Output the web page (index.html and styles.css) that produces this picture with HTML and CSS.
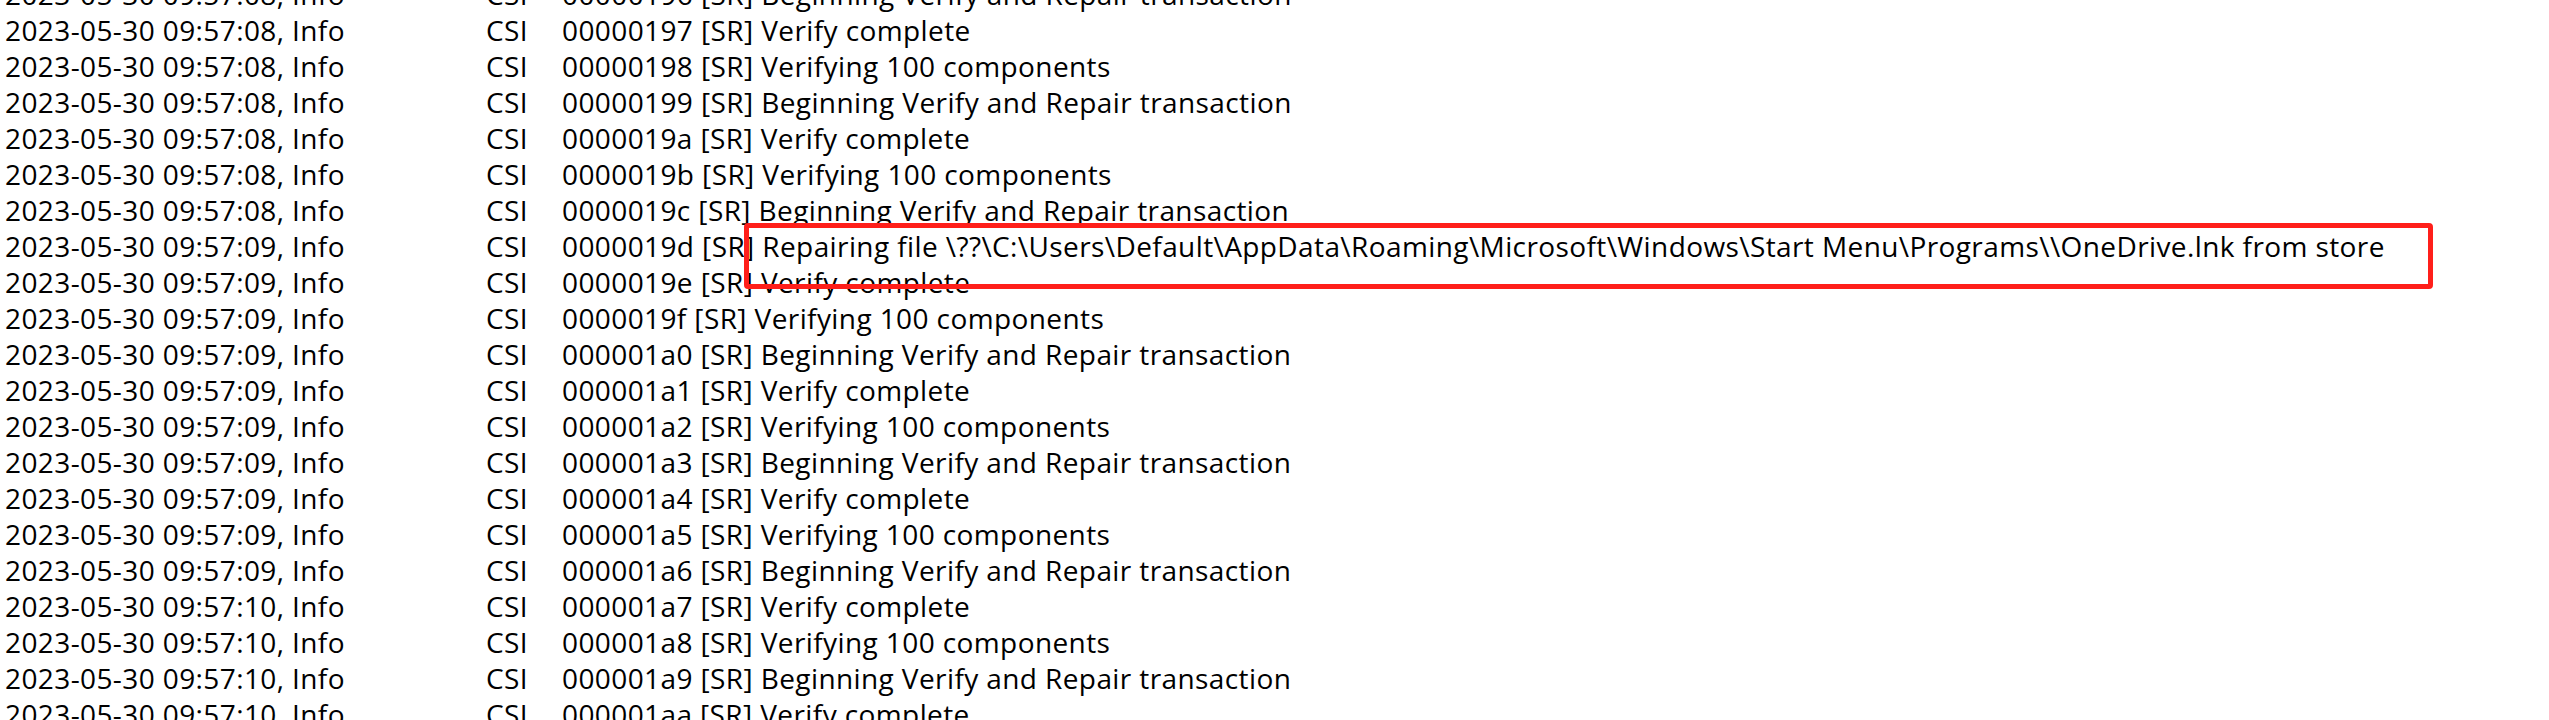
FILE: index.html
```html
<!DOCTYPE html>
<html>
<head>
<meta charset="utf-8">
<link rel="stylesheet" href="styles.css">
</head>
<body>
<div class="log">
  <div class="row"><span class="time">2023-05-30 09:57:08, Info</span><span class="src">CSI</span><span class="msg">00000196 [SR] Beginning Verify and Repair transaction</span></div>
  <div class="row"><span class="time">2023-05-30 09:57:08, Info</span><span class="src">CSI</span><span class="msg">00000197 [SR] Verify complete</span></div>
  <div class="row"><span class="time">2023-05-30 09:57:08, Info</span><span class="src">CSI</span><span class="msg">00000198 [SR] Verifying 100 components</span></div>
  <div class="row"><span class="time">2023-05-30 09:57:08, Info</span><span class="src">CSI</span><span class="msg">00000199 [SR] Beginning Verify and Repair transaction</span></div>
  <div class="row"><span class="time">2023-05-30 09:57:08, Info</span><span class="src">CSI</span><span class="msg">0000019a [SR] Verify complete</span></div>
  <div class="row"><span class="time">2023-05-30 09:57:08, Info</span><span class="src">CSI</span><span class="msg">0000019b [SR] Verifying 100 components</span></div>
  <div class="row"><span class="time">2023-05-30 09:57:08, Info</span><span class="src">CSI</span><span class="msg">0000019c [SR] Beginning Verify and Repair transaction</span></div>
  <div class="row"><span class="time">2023-05-30 09:57:09, Info</span><span class="src">CSI</span><span class="msg">0000019d [SR] Repairing file \??\C:\Users\Default\AppData\Roaming\Microsoft\Windows\Start Menu\Programs\\OneDrive.lnk from store</span></div>
  <div class="row"><span class="time">2023-05-30 09:57:09, Info</span><span class="src">CSI</span><span class="msg">0000019e [SR] Verify complete</span></div>
  <div class="row"><span class="time">2023-05-30 09:57:09, Info</span><span class="src">CSI</span><span class="msg">0000019f [SR] Verifying 100 components</span></div>
  <div class="row"><span class="time">2023-05-30 09:57:09, Info</span><span class="src">CSI</span><span class="msg">000001a0 [SR] Beginning Verify and Repair transaction</span></div>
  <div class="row"><span class="time">2023-05-30 09:57:09, Info</span><span class="src">CSI</span><span class="msg">000001a1 [SR] Verify complete</span></div>
  <div class="row"><span class="time">2023-05-30 09:57:09, Info</span><span class="src">CSI</span><span class="msg">000001a2 [SR] Verifying 100 components</span></div>
  <div class="row"><span class="time">2023-05-30 09:57:09, Info</span><span class="src">CSI</span><span class="msg">000001a3 [SR] Beginning Verify and Repair transaction</span></div>
  <div class="row"><span class="time">2023-05-30 09:57:09, Info</span><span class="src">CSI</span><span class="msg">000001a4 [SR] Verify complete</span></div>
  <div class="row"><span class="time">2023-05-30 09:57:09, Info</span><span class="src">CSI</span><span class="msg">000001a5 [SR] Verifying 100 components</span></div>
  <div class="row"><span class="time">2023-05-30 09:57:09, Info</span><span class="src">CSI</span><span class="msg">000001a6 [SR] Beginning Verify and Repair transaction</span></div>
  <div class="row"><span class="time">2023-05-30 09:57:10, Info</span><span class="src">CSI</span><span class="msg">000001a7 [SR] Verify complete</span></div>
  <div class="row"><span class="time">2023-05-30 09:57:10, Info</span><span class="src">CSI</span><span class="msg">000001a8 [SR] Verifying 100 components</span></div>
  <div class="row"><span class="time">2023-05-30 09:57:10, Info</span><span class="src">CSI</span><span class="msg">000001a9 [SR] Beginning Verify and Repair transaction</span></div>
  <div class="row"><span class="time">2023-05-30 09:57:10, Info</span><span class="src">CSI</span><span class="msg">000001aa [SR] Verify complete</span></div>
</div>
<div class="highlight"></div>
</body>
</html>
```

FILE: styles.css
```css
html, body {
  margin: 0;
  padding: 0;
  background: #ffffff;
  overflow: hidden;
}
body {
  position: relative;
  width: 2549px;
  height: 720px;
  font-family: "Open Sans", "Noto Sans", sans-serif;
  font-size: 28px;
  letter-spacing: 0.4px;
  color: #000000;
}
.log {
  margin-top: -24px;
  padding-left: 5px;
}
.row {
  display: grid;
  grid-template-columns: 481px 76px 1fr;
  height: 36px;
  line-height: 36px;
  white-space: pre;
}
.highlight {
  position: absolute;
  left: 744px;
  top: 223px;
  width: 1679px;
  height: 56px;
  border: 5px solid #ff1f1a;
  border-radius: 4px;
}
```
